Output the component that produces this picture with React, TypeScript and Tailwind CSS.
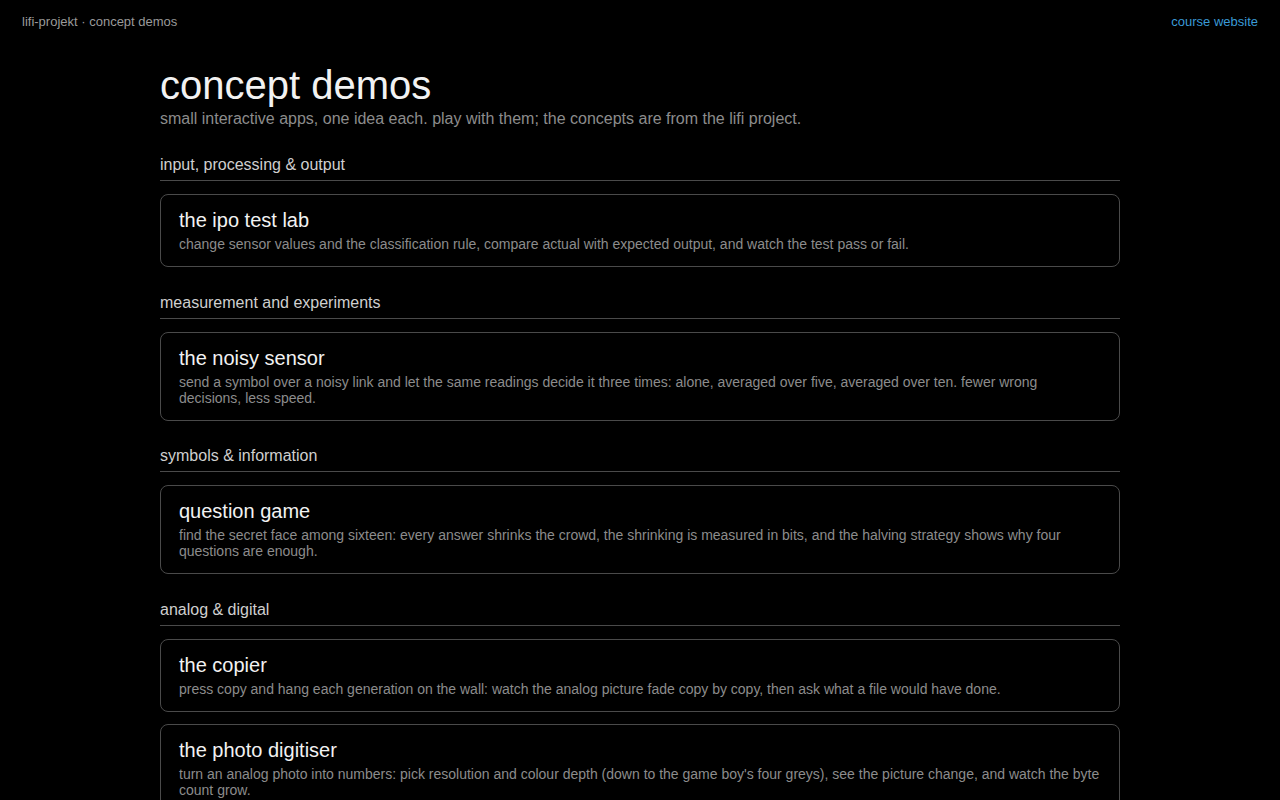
import React from 'react';

type Demo = { title: string; text: string };
type Section = { heading: string; demos: Demo[] };

const sections: Section[] = [
  {
    heading: 'input, processing & output',
    demos: [
      {
        title: 'the ipo test lab',
        text: 'change sensor values and the classification rule, compare actual with expected output, and watch the test pass or fail.',
      },
    ],
  },
  {
    heading: 'measurement and experiments',
    demos: [
      {
        title: 'the noisy sensor',
        text: 'send a symbol over a noisy link and let the same readings decide it three times: alone, averaged over five, averaged over ten. fewer wrong decisions, less speed.',
      },
    ],
  },
  {
    heading: 'symbols & information',
    demos: [
      {
        title: 'question game',
        text: 'find the secret face among sixteen: every answer shrinks the crowd, the shrinking is measured in bits, and the halving strategy shows why four questions are enough.',
      },
    ],
  },
  {
    heading: 'analog & digital',
    demos: [
      {
        title: 'the copier',
        text: 'press copy and hang each generation on the wall: watch the analog picture fade copy by copy, then ask what a file would have done.',
      },
      {
        title: 'the photo digitiser',
        text: "turn an analog photo into numbers: pick resolution and colour depth (down to the game boy's four greys), see the picture change, and watch the byte count grow.",
      },
    ],
  },
];

function DemoCard({ demo }: { demo: Demo }) {
  return (
    <a
      href="#"
      className="block rounded-lg border border-[#4a4a4a] px-[18px] pt-[13px] pb-[14px] hover:border-[#777]"
    >
      <div className="text-[20px] leading-6 text-[#f2f2f2]">{demo.title}</div>
      <p className="mt-[4px] text-[14px] leading-4 text-[#8c8c8c]">{demo.text}</p>
    </a>
  );
}

export default function App() {
  return (
    <div className="min-h-screen bg-black font-['Liberation_Sans',Arial,sans-serif] text-[#e6e6e6]">
      {/* top bar */}
      <header className="flex items-center justify-between px-[22px] pt-[14px] text-[13px] leading-4">
        <span className="text-[#9a9a9a]">lifi-projekt · concept demos</span>
        <a href="#" className="text-[#3a9ad6] hover:underline">
          course website
        </a>
      </header>

      <main className="mx-auto w-[960px] pb-16">
        <h1 className="mt-[33px] text-[40px] leading-[44px] text-[#f2f2f2]">concept demos</h1>
        <p className="mt-[3px] text-[16px] leading-[18px] text-[#8c8c8c]">
          small interactive apps, one idea each. play with them; the concepts are from the lifi project.
        </p>

        {sections.map((s) => (
          <section key={s.heading} className="mt-[26.5px] first-of-type:mt-[28px]">
            <h2 className="border-b border-[#4a4a4a] pb-[6px] text-[16px] leading-[18px] text-[#cfcfcf]">
              {s.heading}
            </h2>
            <div className="mt-[13px] flex flex-col gap-[12px]">
              {s.demos.map((d) => (
                <DemoCard key={d.title} demo={d} />
              ))}
            </div>
          </section>
        ))}
      </main>
    </div>
  );
}
